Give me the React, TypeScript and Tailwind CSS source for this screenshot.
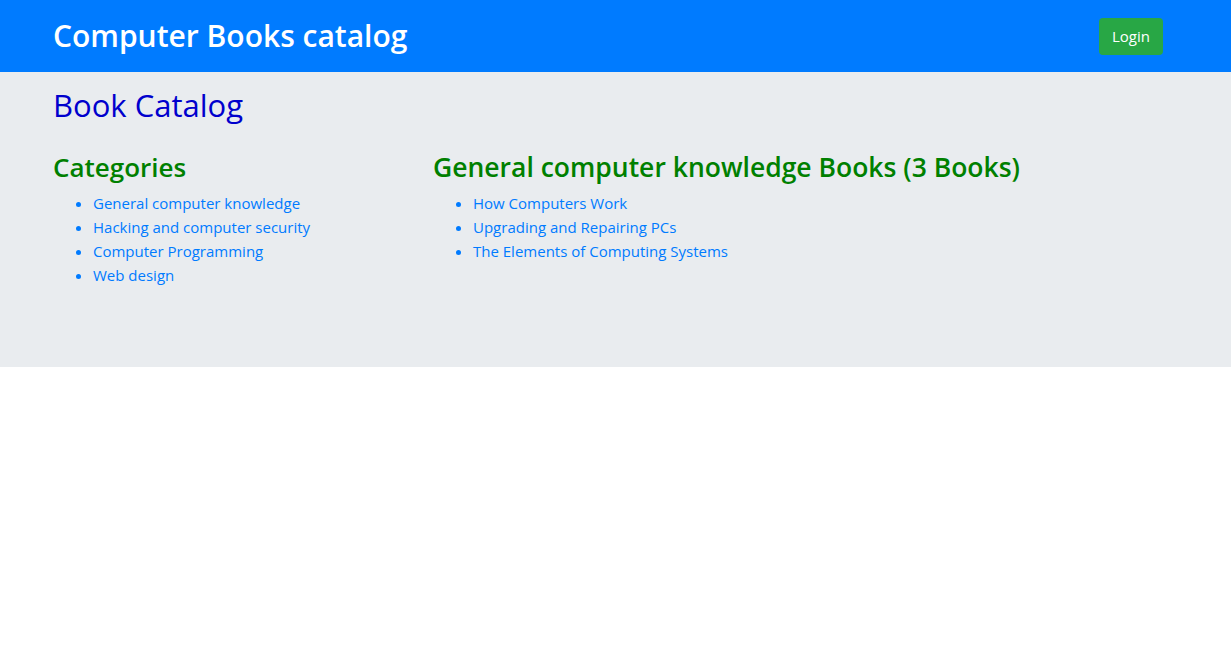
import React from "react";

const categories = [
  "General computer knowledge",
  "Hacking and computer security",
  "Computer Programming",
  "Web design",
];
const books = [
  "How Computers Work",
  "Upgrading and Repairing PCs",
  "The Elements of Computing Systems",
];

export default function App() {
  return (
    <div className="min-h-screen bg-white" style={{ fontFamily: '"Open Sans", "Noto Sans", sans-serif' }}>
      <header className="flex h-[72px] items-center justify-between bg-[#007bff] pl-[53px] pr-[68px]">
        <h1 className="text-[30px] font-semibold leading-none text-white">Computer Books catalog</h1>
        <button className="h-[37px] rounded-[4px] bg-[#28a745] px-[13px] text-[15px] text-white">Login</button>
      </header>
      <main className="h-[295px] bg-[#e9ecef] pl-[53px] pt-[14px]">
        <h2 className="text-[31px] font-medium leading-[38px] text-[#0000cd]">Book Catalog</h2>
        <div className="mt-[28px] flex">
          <section className="w-[380px]">
            <h3 className="text-[26px] font-semibold leading-[30px] text-[#008000]">Categories</h3>
            <ul className="mt-[9px] list-disc pl-[40px] text-[15px] leading-[24px] text-[#007bff] marker:text-[#007bff]">
              {categories.map((c) => (
                <li key={c}>
                  <a href="#">{c}</a>
                </li>
              ))}
            </ul>
          </section>
          <section>
            <h3 className="text-[26.5px] font-semibold leading-[30px] text-[#008000]">General computer knowledge Books (3 Books)</h3>
            <ul className="mt-[9px] list-disc pl-[40px] text-[15px] leading-[24px] text-[#007bff]">
              {books.map((b) => (
                <li key={b}>
                  <a href="#">{b}</a>
                </li>
              ))}
            </ul>
          </section>
        </div>
      </main>
    </div>
  );
}
